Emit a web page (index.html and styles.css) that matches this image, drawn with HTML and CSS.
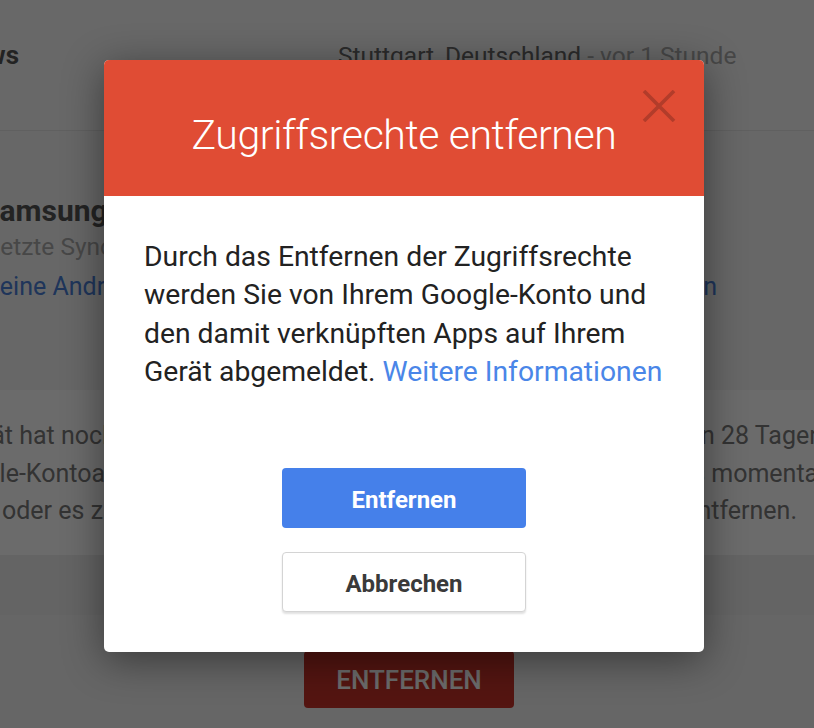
FILE: index.html
```html
<!DOCTYPE html>
<html lang="de">
<head>
<meta charset="utf-8">
<title>Zugriffsrechte entfernen</title>
<link rel="stylesheet" href="styles.css">
</head>
<body>
<div class="page">
  <header class="top">
    <div class="device-row">
      <div class="name-cell"><span class="device-name">Windows</span></div>
      <div class="device-loc">Stuttgart, Deutschland <span class="muted">- vor 1 Stunde</span></div>
    </div>
  </header>
  <section class="device">
    <h2 class="model">Samsung Galaxy Tab</h2>
    <p class="sync">Letzte Synchronisierung: heute</p>
    <div class="links">
      <a class="link">Meine Android-Geräte verwalten</a>
      <a class="link">Gerät suchen</a>
    </div>
  </section>
  <section class="notice">
    <div class="line l1"><span>Gerät hat noch Zugriff</span><span>in den letzten 28 Tagen</span></div>
    <div class="line l2"><span>Google-Kontoangaben</span><span>Sie es momentan</span></div>
    <div class="line l3"><span>oder es zu verwenden,</span><span>Zugriff zu entfernen.</span></div>
  </section>
  <div class="gap"></div>
  <div class="actions"><button class="danger">ENTFERNEN</button></div>
</div>

<div class="overlay">
  <div class="dialog">
    <div class="dialog-head">
      <h1 class="dialog-title">Zugriffsrechte entfernen</h1>
      <button class="close" aria-label="Schließen">
        <svg width="34" height="32" viewBox="0 0 34 32"><path d="M2 1 L32 31 M32 1 L2 31" stroke="#b23c2a" stroke-width="3.6" fill="none"/></svg>
      </button>
    </div>
    <div class="dialog-body">
      <p class="dialog-text">Durch das Entfernen der Zugriffsrechte werden Sie von Ihrem Google-Konto und den damit verknüpften Apps auf Ihrem Gerät abgemeldet. <a class="more">Weitere Informationen</a></p>
      <div class="dialog-actions">
        <button class="btn primary">Entfernen</button>
        <button class="btn secondary">Abbrechen</button>
      </div>
    </div>
  </div>
</div>
</body>
</html>
```

FILE: styles.css
```css
* { box-sizing: border-box; }
html, body { margin: 0; padding: 0; }
body {
  width: 814px;
  height: 728px;
  overflow: hidden;
  font-family: Roboto, "Noto Sans", sans-serif;
  background: #f3f3f3;
  position: relative;
}

/* underlying page */
.page { width: 814px; }
.top {
  height: 131px;
  background: #f8f8f8;
  border-bottom: 1px solid #e4e4e4;
  padding-top: 38px;
}
.device-row { display: flex; align-items: center; height: 34px; }
.name-cell {
  width: 19px;
  display: flex;
  justify-content: flex-end;
  white-space: nowrap;
}
.device-name { font-weight: 700; font-size: 26px; color: #555; }
.device-loc {
  margin-left: 319px;
  font-size: 24.5px;
  color: #666;
  white-space: nowrap;
}
.muted { color: #aaa; }

.device {
  height: 259px;
  background: #f6f6f6;
  padding-top: 62px;
}
.model {
  margin: 0 0 0 -19px;
  font-size: 30px;
  font-weight: 700;
  color: #555;
  line-height: 36px;
  white-space: nowrap;
}
.sync {
  margin: 2px 0 0 -13px;
  font-size: 24.5px;
  color: #aaa;
  line-height: 32px;
  white-space: nowrap;
}
.links {
  display: flex;
  justify-content: space-between;
  margin: 8px 97px 0 -22px;
  font-size: 25px;
  line-height: 32px;
  white-space: nowrap;
}
.link { color: #4a7fd6; }

.notice {
  height: 165px;
  background: #ffffff;
  padding-top: 27px;
  font-size: 25px;
  color: #7a7a7a;
  line-height: 37.5px;
}
.line {
  display: flex;
  justify-content: space-between;
  white-space: nowrap;
}
.l1 { margin-left: -47px; margin-right: -9px; }
.l2 { margin-left: -60px; margin-right: -18px; }
.l3 { margin-left: 2px; margin-right: 17px; }

.gap { height: 60px; background: #eeeeee; }
.actions { display: flex; justify-content: center; padding-top: 36px; }
.danger {
  width: 210px;
  height: 57px;
  margin-left: 4px;
  border: none;
  border-radius: 4px;
  background: #c8342a;
  color: #fff;
  font-family: Roboto, sans-serif;
  font-size: 26px;
  font-weight: 500;
}

/* overlay + dialog */
.overlay {
  position: absolute;
  inset: 0;
  background: rgba(0, 0, 0, 0.58);
  padding: 60px 0 0 104px;
}
.dialog {
  width: 600px;
  height: 592px;
  background: #fff;
  border-radius: 5px;
  overflow: hidden;
  box-shadow: 0 8px 40px rgba(0, 0, 0, 0.45);
  display: flex;
  flex-direction: column;
}
.dialog-head {
  position: relative;
  height: 136px;
  background: #e04c34;
  display: flex;
  align-items: center;
  justify-content: center;
}
.dialog-title {
  margin: 13px 0 0 0;
  font-size: 41px;
  font-weight: 300;
  color: #fff;
  letter-spacing: -0.4px;
}
.close {
  position: absolute;
  top: 30px;
  right: 28px;
  padding: 0;
  border: none;
  background: none;
  width: 34px;
  height: 32px;
}
.close svg { display: block; }
.dialog-body {
  flex: 1;
  padding: 42px 30px 40px 40px;
  display: flex;
  flex-direction: column;
}
.dialog-text {
  margin: 0;
  font-size: 28.3px;
  line-height: 38.3px;
  color: #222;
}
.more { color: #4a86e8; }
.dialog-actions {
  margin-top: auto;
  margin-right: 10px;
  display: flex;
  flex-direction: column;
  align-items: center;
  gap: 24px;
}
.btn {
  width: 244px;
  height: 60px;
  padding-top: 4px;
  border-radius: 4px;
  font-family: Roboto, sans-serif;
  font-size: 24px;
  font-weight: 700;
}
.primary {
  background: #4580ea;
  color: #fff;
  border: none;
}
.secondary {
  background: #fff;
  color: #3a3a3a;
  border: 1px solid #d4d4d4;
  box-shadow: 0 2px 2px rgba(0, 0, 0, 0.12);
}
```
